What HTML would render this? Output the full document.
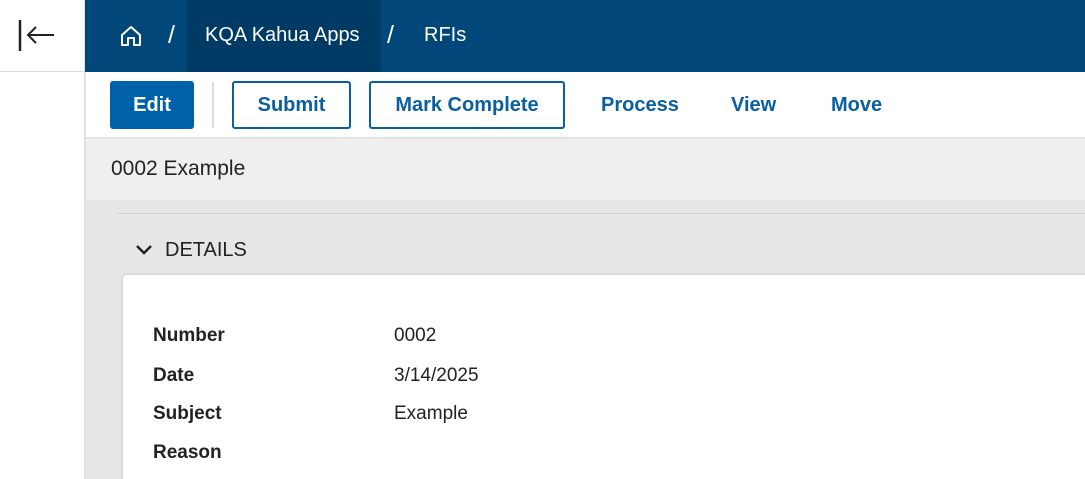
<!DOCTYPE html>
<html><head><style>
*{margin:0;padding:0;box-sizing:border-box}
html,body{width:1085px;height:479px;overflow:hidden}
body{font-family:"Liberation Sans",Arial,sans-serif;background:#e6e6e6;position:relative}
.abs{position:absolute}
.side{left:0;top:0;width:85px;height:479px;background:#fff;border-right:1px solid #ddd}
.top{left:85px;top:0;width:1000px;height:72px;background:#01477a;color:#fff;font-size:20px}
.btn{position:absolute;top:81px;height:48px;border:2px solid #0a5fa0;border-radius:3px;color:#0a5fa0;font-weight:bold;font-size:20px;display:flex;align-items:center;justify-content:center;background:#fff}
.lnk{position:absolute;top:94px;color:#0a5fa0;font-weight:bold;font-size:20px}
.lbl{position:absolute;left:153px;font-weight:bold;font-size:19px;color:#222}
.val{position:absolute;left:394px;font-size:19px;color:#222}
</style></head><body>
<div class="abs side"></div>
<div class="abs" style="left:0;top:71px;width:85px;height:1px;background:#ddd"></div>
<svg class="abs" style="left:18px;top:20px" width="40" height="32"><path d="M2 0V31" stroke="#222" stroke-width="2.5"/><path d="M36 15H10M18 7l-8 8 8 8" stroke="#222" stroke-width="2" fill="none"/></svg>
<div class="abs top">
 <div class="abs" style="left:102px;top:0;width:194px;height:72px;background:#003b66"></div>
 <svg class="abs" style="left:35px;top:25px" width="22" height="22"><path d="M2 10L11 2l9 8v10h-6v-7h-6v7H2z" stroke="#fff" stroke-width="2" fill="none" stroke-linejoin="round"/></svg>
 <div class="abs" style="left:83px;top:21px;font-size:25px">/</div>
 <div class="abs" style="left:120px;top:24px">KQA Kahua Apps</div>
 <div class="abs" style="left:302px;top:21px;font-size:25px">/</div>
 <div class="abs" style="left:339px;top:24px">RFIs</div>
</div>
<div class="abs" style="left:86px;top:72px;width:999px;height:66px;background:#fff;border-bottom:1px solid #ddd"></div>
<div class="btn" style="left:110px;width:84px;background:#0061a8;border-color:#0061a8;color:#fff">Edit</div>
<div class="abs" style="left:212px;top:82px;width:2px;height:46px;background:#ddd"></div>
<div class="btn" style="left:232px;width:119px">Submit</div>
<div class="btn" style="left:369px;width:196px">Mark Complete</div>
<div class="lnk" style="left:601px">Process</div>
<div class="lnk" style="left:731px">View</div>
<div class="lnk" style="left:831px">Move</div>
<div class="abs" style="left:86px;top:139px;width:999px;height:61px;background:#efefef"></div>
<div class="abs" style="left:111px;top:157px;font-size:21px;color:#222">0002 Example</div>
<div class="abs" style="left:117px;top:213px;width:968px;height:1px;background:#d0d0d0"></div>
<svg class="abs" style="left:135px;top:243px" width="18" height="14"><path d="M2 3l7 7 7-7" stroke="#222" stroke-width="2.5" fill="none"/></svg>
<div class="abs" style="left:165px;top:239px;font-size:20px;color:#222">DETAILS</div>
<div class="abs" style="left:123px;top:275px;width:970px;height:220px;background:#fff;border-radius:4px;box-shadow:0 0 3px rgba(0,0,0,.2)"></div>
<div class="lbl" style="top:325px">Number</div><div class="val" style="top:325px">0002</div>
<div class="lbl" style="top:365px">Date</div><div class="val" style="top:365px">3/14/2025</div>
<div class="lbl" style="top:403px">Subject</div><div class="val" style="top:403px">Example</div>
<div class="lbl" style="top:442px">Reason</div>
</body></html>
